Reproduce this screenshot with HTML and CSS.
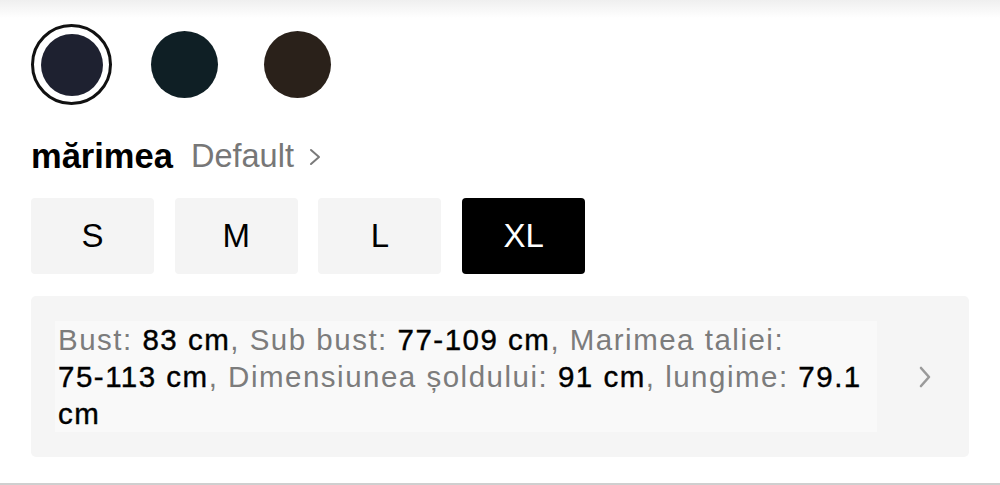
FILE: index.html
```html
<!DOCTYPE html>
<html lang="ro">
<head>
<meta charset="utf-8">
<title>Mărimea</title>
<link rel="stylesheet" href="styles.css">
</head>
<body>
<div class="top-fade"></div>
<main class="panel">
  <div class="swatches">
    <button class="swatch selected"><span class="dot navy"></span></button>
    <button class="swatch"><span class="dot teal"></span></button>
    <button class="swatch"><span class="dot brown"></span></button>
  </div>

  <div class="size-head">
    <span class="size-title">mărimea</span>
    <span class="size-default">Default</span>
    <svg class="head-chev" width="14" height="18" viewBox="0 0 14 18"><path d="M3 2 L11 9 L3 16" fill="none" stroke="#7a7a7a" stroke-width="2" stroke-linecap="round" stroke-linejoin="round"/></svg>
  </div>

  <div class="sizes">
    <button class="size">S</button>
    <button class="size">M</button>
    <button class="size">L</button>
    <button class="size active">XL</button>
  </div>

  <div class="info">
    <p class="info-text"><span class="k">Bust: </span><span class="v">83 cm</span><span class="k">, Sub bust: </span><span class="v nw">77-109 cm</span><span class="k">, Marimea taliei: </span><span class="v nw">75-113 cm</span><span class="k">, Dimensiunea șoldului: </span><span class="v">91 cm</span><span class="k">, lungime: </span><span class="v">79.1 cm</span></p>
    <svg class="info-chev" width="16" height="24" viewBox="0 0 16 24"><path d="M4 3 L12 12 L4 21" fill="none" stroke="#9a9a9a" stroke-width="2.6" stroke-linecap="round" stroke-linejoin="round"/></svg>
  </div>
</main>
<div class="divider"></div>
</body>
</html>
```

FILE: styles.css
```css
* { box-sizing: border-box; }
html, body { margin: 0; padding: 0; background: #fff; }
body {
  width: 1000px;
  height: 485px;
  overflow: hidden;
  font-family: "Liberation Sans", Arial, sans-serif;
  color: #000;
  position: relative;
}
.top-fade {
  position: absolute;
  left: 0; right: 0; top: 0;
  height: 18px;
  background: linear-gradient(#efefef, rgba(255,255,255,0));
}
.panel {
  padding: 24px 31px 0 31px;
}
.swatches {
  display: flex;
  gap: 32px;
}
.swatch {
  width: 81px;
  height: 81px;
  border-radius: 50%;
  border: 3.5px solid transparent;
  background: transparent;
  padding: 0;
  display: flex;
  align-items: center;
  justify-content: center;
}
.swatch.selected { border-color: #111; }
.dot {
  display: block;
  width: 67px;
  height: 67px;
  border-radius: 50%;
}
.swatch.selected .dot { width: 62px; height: 62px; }
.navy { background: #1e2130; }
.teal { background: #0f1f25; }
.brown { background: #2a211a; }

.size-head {
  margin-top: 31px;
  height: 40px;
  line-height: 40px;
  display: flex;
  align-items: center;
}
.size-title {
  font-size: 34.5px;
  font-weight: 700;
}
.size-default {
  font-size: 32.5px;
  color: #777;
  margin-left: 18px;
}
.head-chev { margin-left: 14px; margin-top: 2px; }

.sizes {
  margin-top: 22px;
  display: flex;
  gap: 20.7px;
}
.size {
  width: 123px;
  height: 76px;
  border: 0;
  border-radius: 4px;
  background: #f4f4f4;
  font-family: "Liberation Sans", Arial, sans-serif;
  font-size: 33px;
  color: #000;
  padding: 0;
}
.size.active { background: #000; color: #fff; }

.info {
  margin-top: 22px;
  height: 161px;
  background: #f5f5f5;
  border-radius: 5px;
  display: flex;
  align-items: center;
  padding: 0 0 0 24px;
}
.info-text {
  margin: 0;
  width: 822px;
  padding: 0 0 0 3px;
  background: #f9f9f9;
  font-family: "Liberation Sans", Arial, sans-serif;
  font-size: 29.5px;
  letter-spacing: 1.5px;
  line-height: 37px;
}
.k { color: #7c7c7c; }
.v { color: #000; -webkit-text-stroke: 0.4px #000; }
.nw { white-space: nowrap; }
.info-chev { margin-left: 40px; }

.divider {
  position: absolute;
  left: 0; right: 0; bottom: 0;
  height: 2px;
  background: #cfcfcf;
}
```
